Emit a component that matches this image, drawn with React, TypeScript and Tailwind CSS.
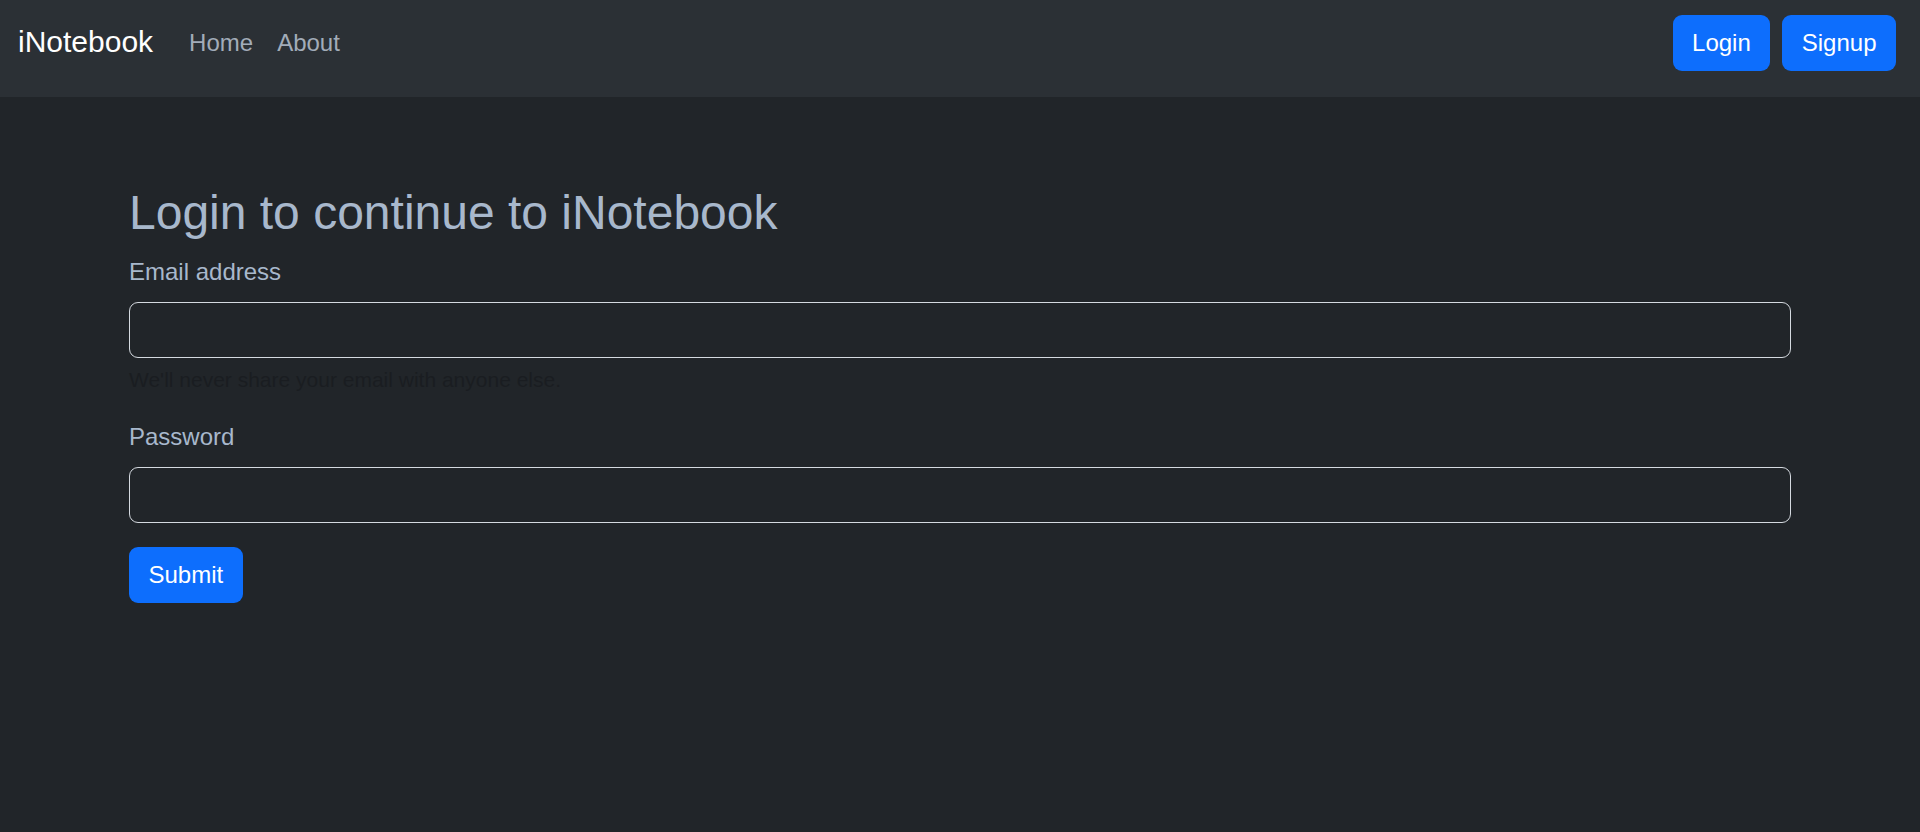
const FONT = "font-['Liberation_Sans',Arial,sans-serif]";

function NavButton({ label }: { label: string }) {
  return (
    <button className="h-[56px] px-[19.5px] rounded-[9px] bg-[#0d6efd] text-white text-[24px] leading-[36px]">
      {label}
    </button>
  );
}

function Field({ label, type, help }: { label: string; type: string; help?: string }) {
  return (
    <div className="mb-[24px]">
      <label className="block text-[24px] leading-[36px] text-[#a8b8cc] mb-[12px]">{label}</label>
      <input
        type={type}
        className="block w-full h-[56px] px-[18px] bg-transparent border-[1.5px] border-[#d5dae0] rounded-[9px] text-[24px] text-[#dee2e6] outline-none"
      />
      {help && <div className="mt-[6px] text-[21px] leading-[31.5px] text-[#1a1d21]">{help}</div>}
    </div>
  );
}

export default function App() {
  return (
    <div className={`min-h-screen bg-[#212529] ${FONT}`}>
      <nav className="h-[97px] bg-[#2b3035]">
        <div className="h-[86px] flex items-center pl-[18px] pr-[24px]">
          <a className="text-[30px] leading-[45px] text-white mr-[24px] mb-[3px]">iNotebook</a>
          <ul className="flex items-center mb-[1px]">
            <li>
              <a className="block px-[12px] text-[24px] leading-[36px] text-[#a2acb9]">Home</a>
            </li>
            <li>
              <a className="block px-[12px] text-[24px] leading-[36px] text-[#a2acb9]">About</a>
            </li>
          </ul>
          <div className="ml-auto flex items-center gap-[12px]">
            <NavButton label="Login" />
            <NavButton label="Signup" />
          </div>
        </div>
      </nav>

      <main className="w-[1662px] mx-auto pt-[87px]">
        <h2 className="text-[48px] leading-[57.6px] font-normal text-[#a8b8cc] mb-[12px]">
          Login to continue to iNotebook
        </h2>
        <form onSubmit={(e) => e.preventDefault()}>
          <Field label="Email address" type="email" help="We'll never share your email with anyone else." />
          <Field label="Password" type="password" />
          <button
            type="submit"
            className="h-[56px] px-[19.5px] rounded-[9px] bg-[#0d6efd] text-white text-[24px] leading-[36px]"
          >
            Submit
          </button>
        </form>
      </main>
    </div>
  );
}
